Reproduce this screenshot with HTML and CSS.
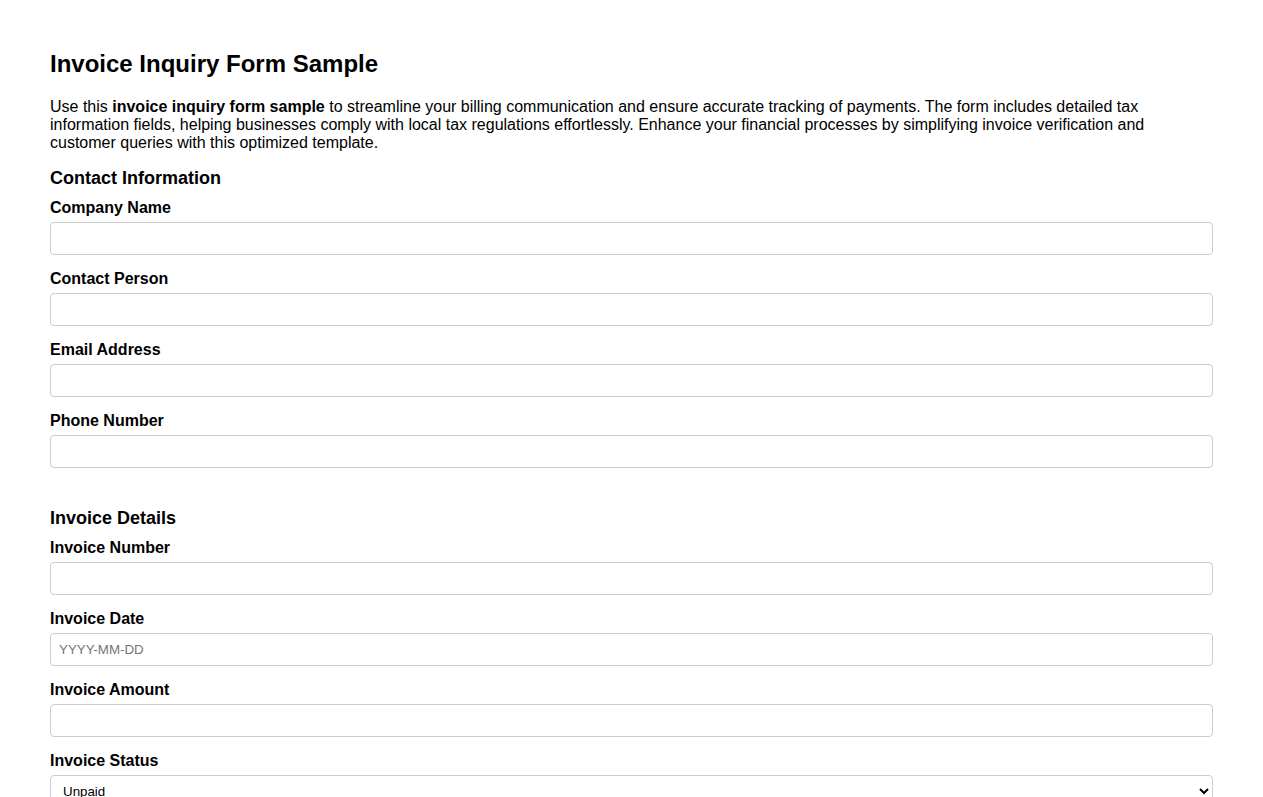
FILE: index.html
```html
<!DOCTYPE html>
<html lang="en">
<head>
<meta charset="utf-8">
<title>Invoice Inquiry Form Sample</title>
<link rel="stylesheet" href="styles.css">
</head>
<body>
<main class="page">
  <h1 class="title">Invoice Inquiry Form Sample</h1>
  <p class="intro">Use this <strong>invoice inquiry form sample</strong> to streamline your billing communication and ensure accurate tracking of payments. The form includes detailed tax information fields, helping businesses comply with local tax regulations effortlessly. Enhance your financial processes by simplifying invoice verification and customer queries with this optimized template.</p>
  <form class="form">
    <section class="section">
      <h2 class="section-title">Contact Information</h2>
      <div class="field">
        <label class="label" for="company">Company Name</label>
        <input class="input" id="company" type="text">
      </div>
      <div class="field">
        <label class="label" for="contact">Contact Person</label>
        <input class="input" id="contact" type="text">
      </div>
      <div class="field">
        <label class="label" for="email">Email Address</label>
        <input class="input" id="email" type="email">
      </div>
      <div class="field">
        <label class="label" for="phone">Phone Number</label>
        <input class="input" id="phone" type="tel">
      </div>
    </section>
    <section class="section">
      <h2 class="section-title">Invoice Details</h2>
      <div class="field">
        <label class="label" for="number">Invoice Number</label>
        <input class="input" id="number" type="text">
      </div>
      <div class="field">
        <label class="label" for="date">Invoice Date</label>
        <input class="input" id="date" type="text" placeholder="YYYY-MM-DD">
      </div>
      <div class="field">
        <label class="label" for="amount">Invoice Amount</label>
        <input class="input" id="amount" type="text">
      </div>
      <div class="field">
        <label class="label" for="status">Invoice Status</label>
        <select class="input select" id="status">
          <option>Unpaid</option>
          <option>Paid</option>
          <option>Overdue</option>
        </select>
      </div>
    </section>
  </form>
</main>
</body>
</html>
```
FILE: styles.css
```css
* { box-sizing: border-box; }
html, body { margin: 0; padding: 0; background: #fff; }
body {
  font-family: "Liberation Sans", Arial, sans-serif;
  color: #000;
}
.page {
  padding: 50px 50px 40px;
}
.title {
  font-size: 24px;
  line-height: 28px;
  font-weight: bold;
  margin: 0 0 20px;
}
.intro {
  font-size: 16px;
  line-height: 18px;
  margin: 0 0 16px;
}
.section {
  margin-bottom: 40px;
}
.section-title {
  font-size: 18px;
  line-height: 21px;
  font-weight: bold;
  margin: 0 0 10px;
}
.field {
  margin-bottom: 15px;
}
.label {
  display: block;
  font-size: 16px;
  line-height: 18px;
  font-weight: bold;
  margin-bottom: 5px;
}
.input {
  display: block;
  width: 100%;
  height: 33px;
  padding: 8px;
  font-family: "Liberation Sans", Arial, sans-serif;
  font-size: 13.333px;
  border: 1px solid #ccc;
  border-radius: 4px;
  background: #fff;
  color: #000;
}
.input::placeholder { color: #757575; }
.select { padding: 0 8px 0 8px; }
```
